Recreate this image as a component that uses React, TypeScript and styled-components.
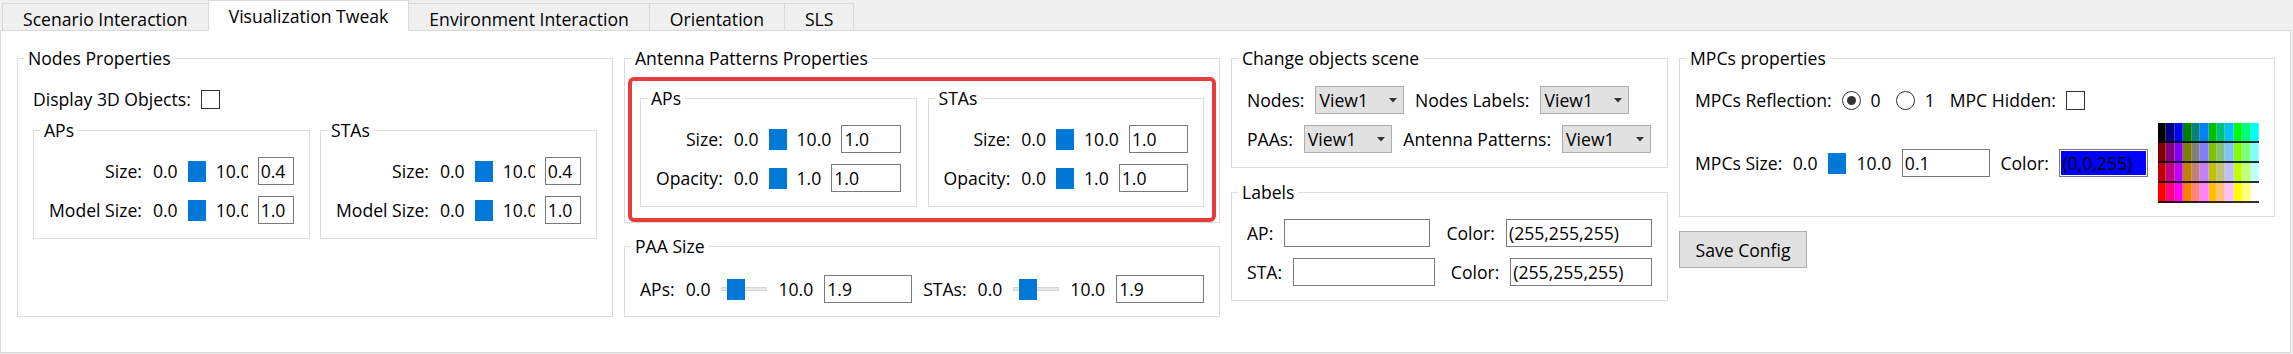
import React from "react";
import styled, { createGlobalStyle } from "styled-components";

const GlobalStyle = createGlobalStyle`
  html, body {
    margin: 0;
    padding: 0;
    background: #f0f0f0;
  }
  body {
    font-family: "Open Sans", "Noto Sans", "Liberation Sans", sans-serif;
    font-size: 17.6px;
    line-height: 20px;
    color: #000;
  }
  * {
    box-sizing: border-box;
  }
`;

const Window = styled.div`
  width: 2293px;
  height: 354px;
  overflow: hidden;
  background: #f0f0f0;
`;

const TabBar = styled.div`
  display: flex;
  align-items: flex-end;
  height: 30px;
  padding-left: 2px;
`;

const Tab = styled.div<{ $active?: boolean }>`
  position: relative;
  z-index: ${(p) => (p.$active ? 2 : 1)};
  height: ${(p) => (p.$active ? 31 : 27)}px;
  margin-bottom: ${(p) => (p.$active ? -1 : 0)}px;
  margin-left: -1px;
  padding: 4.5px 20px 0;
  border: 1px solid #d9d9d9;
  border-bottom: none;
  background: ${(p) => (p.$active ? "#fff" : "#f0f0f0")};
  white-space: nowrap;
  &:first-child {
    margin-left: 0;
  }
`;

const Pane = styled.div`
  display: flex;
  align-items: stretch;
  gap: 11px;
  height: 323px;
  margin-right: 2px;
  padding: 27px 15px 35px 16px;
  background: #fff;
  border: 1px solid #d9d9d9;
`;

const Column = styled.div<{ $w: number; $gap?: number; $top?: boolean }>`
  display: flex;
  flex-direction: column;
  flex: 0 0 ${(p) => p.$w}px;
  gap: ${(p) => p.$gap ?? 0}px;
  ${(p) => p.$top && "align-self: flex-start;"}
`;

const Group = styled.div<{ $pb?: number; $grow?: boolean }>`
  position: relative;
  min-width: 0;
  border: 1px solid #dcdcdc;
  padding: 0 15px ${(p) => p.$pb ?? 14}px;
  ${(p) => p.$grow && "flex: 1;"}
`;

const GroupTitle = styled.div`
  width: fit-content;
  margin: -11px 0 0 -9px;
  padding: 0 4px;
  background: #fff;
  line-height: 20px;
  white-space: nowrap;
`;

const GroupBody = styled.div<{ $pt: number; $gap?: number }>`
  display: flex;
  flex-direction: column;
  gap: ${(p) => p.$gap ?? 11}px;
  padding-top: ${(p) => p.$pt}px;
`;

const SubRow = styled.div<{ $gap: number }>`
  display: flex;
  gap: ${(p) => p.$gap}px;
  & > * {
    flex: 1 1 0;
  }
`;

const Highlight = styled.div`
  position: absolute;
  left: 3px;
  right: 3px;
  top: 18px;
  bottom: 0;
  border: 4px solid #e63c3c;
  border-radius: 6px;
  pointer-events: none;
`;

const Row = styled.div<{ $gap?: number }>`
  display: flex;
  align-items: center;
  gap: ${(p) => p.$gap ?? 11}px;
  min-height: 28px;
  white-space: nowrap;
`;

const Form = styled.div`
  display: grid;
  grid-template-columns: max-content minmax(0, 1fr);
  column-gap: 11px;
  row-gap: 11px;
  align-items: center;
`;

const FormLabel = styled.span`
  justify-self: end;
  white-space: nowrap;
`;

const Field = styled.div`
  display: flex;
  align-items: center;
  gap: 10px;
  min-width: 0;
  height: 28px;
`;

const Text = styled.span<{ $ml?: number }>`
  flex: none;
  white-space: nowrap;
  margin-left: ${(p) => p.$ml ?? 0}px;
`;

const MaxText = styled.span<{ $w?: number }>`
  flex: none;
  white-space: nowrap;
  overflow: hidden;
  ${(p) => p.$w && `width: ${p.$w}px;`}
`;

const SliderTrack = styled.div<{ $w: number }>`
  position: relative;
  flex: none;
  display: flex;
  align-items: center;
  width: ${(p) => p.$w}px;
  height: 21px;
`;

const Groove = styled.div`
  width: 100%;
  height: 4px;
  background: #e7e7e7;
  border: 1px solid #d6d6d6;
`;

const Handle = styled.div`
  position: absolute;
  top: 0;
  width: 18px;
  height: 21px;
  background: #0078d7;
`;

const LineEdit = styled.input<{ $w?: number }>`
  flex: ${(p) => (p.$w ? `0 0 ${p.$w}px` : "1 1 0")};
  width: 0;
  min-width: 0;
  height: 28px;
  padding: 0 2px;
  font: inherit;
  color: #000;
  background: #fff;
  border: 1px solid #7a7a7a;
  border-radius: 0;
  outline: none;
`;

const ColorBox = styled.div`
  flex: 1 1 0;
  min-width: 0;
  height: 28px;
  padding: 3px 2px 0;
  background: #0000ff;
  border: 1px solid #7a7a7a;
  box-shadow: inset 0 0 0 1px #fff;
  color: #000;
`;

const Combo = styled.div`
  display: flex;
  align-items: center;
  justify-content: space-between;
  flex: none;
  width: 88.5px;
  height: 28px;
  padding: 0 6px 0 3px;
  background: #e1e1e1;
  border: 1px solid #adadad;
`;

const CheckBox = styled.div`
  flex: none;
  width: 19px;
  height: 19px;
  background: #fff;
  border: 1px solid #333;
`;

const Radio = styled.div<{ $checked?: boolean }>`
  display: flex;
  align-items: center;
  justify-content: center;
  flex: none;
  width: 19px;
  height: 19px;
  border: 1px solid #333;
  border-radius: 50%;
  background: #fff;
  &::after {
    content: "";
    width: 9px;
    height: 9px;
    border-radius: 50%;
    background: ${(p) => (p.$checked ? "#333" : "transparent")};
  }
`;

const RadioOption = styled.label`
  display: flex;
  align-items: center;
  gap: 10px;
  margin-right: 5px;
`;

const Palette = styled.div`
  flex: none;
  display: grid;
  grid-template-columns: repeat(12, 1fr);
  grid-auto-rows: 20px;
  width: 101px;
`;

const Swatch = styled.div<{ $c: string }>`
  background: ${(p) => p.$c};
  box-shadow: inset 0 -2px 0 rgba(0, 0, 0, 0.8), inset -1px 0 0 rgba(255, 255, 255, 0.25);
`;

const Button = styled.button`
  width: 128px;
  height: 37px;
  padding: 0;
  font: inherit;
  color: #000;
  background: #e1e1e1;
  border: 1px solid #adadad;
  border-radius: 0;
`;

const tabs = [
  "Scenario Interaction",
  "Visualization Tweak",
  "Environment Interaction",
  "Orientation",
  "SLS",
];

const levels = [0, 128, 192, 255];
const blues = [0, 128, 255];
const paletteColors = levels.flatMap((r) =>
  levels.flatMap((g) => blues.map((b) => `rgb(${r},${g},${b})`))
);

function Slider({ width = 18, pct = 0 }: { width?: number; pct?: number }) {
  return (
    <SliderTrack $w={width}>
      {width > 18 && <Groove />}
      <Handle style={{ left: (width - 18) * pct }} />
    </SliderTrack>
  );
}

function Arrow() {
  return (
    <svg width="8" height="5" viewBox="0 0 8 5">
      <path d="M0 0h8L4 4.5z" fill="#333" />
    </svg>
  );
}

type SliderRow = { label: string; max: string; value: string };

function SliderGroup({
  title,
  rows,
  maxW,
  inputW,
}: {
  title: string;
  rows: SliderRow[];
  maxW?: number;
  inputW?: number;
}) {
  return (
    <Group>
      <GroupTitle>{title}</GroupTitle>
      <GroupBody $pt={17}>
        <Form>
          {rows.map((r) => (
            <React.Fragment key={r.label}>
              <FormLabel>{r.label}</FormLabel>
              <Field>
                <Text>0.0</Text>
                <Slider />
                <MaxText $w={maxW}>{r.max}</MaxText>
                <LineEdit $w={inputW} value={r.value} readOnly />
              </Field>
            </React.Fragment>
          ))}
        </Form>
      </GroupBody>
    </Group>
  );
}

const nodeRows = (v: string): SliderRow[] => [
  { label: "Size:", max: "10.0", value: v },
  { label: "Model Size:", max: "10.0", value: "1.0" },
];

const antennaRows: SliderRow[] = [
  { label: "Size:", max: "10.0", value: "1.0" },
  { label: "Opacity:", max: "1.0", value: "1.0" },
];

export default function App() {
  return (
    <Window>
      <GlobalStyle />
      <TabBar>
        {tabs.map((t) => (
          <Tab key={t} $active={t === "Visualization Tweak"}>
            {t}
          </Tab>
        ))}
      </TabBar>
      <Pane>
        <Column $w={596}>
          <Group $grow>
            <GroupTitle>Nodes Properties</GroupTitle>
            <GroupBody $pt={17} $gap={17}>
              <Row $gap={10}>
                <Text>Display 3D Objects:</Text>
                <CheckBox />
              </Row>
              <SubRow $gap={10}>
                <SliderGroup title="APs" rows={nodeRows("0.4")} maxW={32} />
                <SliderGroup title="STAs" rows={nodeRows("0.4")} maxW={32} />
              </SubRow>
            </GroupBody>
          </Group>
        </Column>

        <Column $w={596} $gap={23}>
          <Group $pb={15}>
            <GroupTitle>Antenna Patterns Properties</GroupTitle>
            <GroupBody $pt={30}>
              <SubRow $gap={11}>
                <SliderGroup title="APs" rows={antennaRows} />
                <SliderGroup title="STAs" rows={antennaRows} />
              </SubRow>
            </GroupBody>
            <Highlight />
          </Group>
          <Group $pb={13}>
            <GroupTitle>PAA Size</GroupTitle>
            <GroupBody $pt={19}>
              <Row>
                <Text>APs:</Text>
                <Text>0.0</Text>
                <Slider width={46} pct={0.19} />
                <Text>10.0</Text>
                <LineEdit value="1.9" readOnly />
                <Text>STAs:</Text>
                <Text>0.0</Text>
                <Slider width={46} pct={0.19} />
                <Text>10.0</Text>
                <LineEdit value="1.9" readOnly />
              </Row>
            </GroupBody>
          </Group>
        </Column>

        <Column $w={437} $gap={24} $top>
          <Group>
            <GroupTitle>Change objects scene</GroupTitle>
            <GroupBody $pt={18}>
              <Row>
                <Text>Nodes:</Text>
                <Combo>
                  View1
                  <Arrow />
                </Combo>
                <Text>Nodes Labels:</Text>
                <Combo>
                  View1
                  <Arrow />
                </Combo>
              </Row>
              <Row>
                <Text>PAAs:</Text>
                <Combo>
                  View1
                  <Arrow />
                </Combo>
                <Text>Antenna Patterns:</Text>
                <Combo>
                  View1
                  <Arrow />
                </Combo>
              </Row>
            </GroupBody>
          </Group>
          <Group>
            <GroupTitle>Labels</GroupTitle>
            <GroupBody $pt={17}>
              <Row>
                <Text>AP:</Text>
                <LineEdit value="" readOnly />
                <Text $ml={5}>Color:</Text>
                <LineEdit value="(255,255,255)" readOnly />
              </Row>
              <Row>
                <Text>STA:</Text>
                <LineEdit value="" readOnly />
                <Text $ml={5}>Color:</Text>
                <LineEdit value="(255,255,255)" readOnly />
              </Row>
            </GroupBody>
          </Group>
        </Column>

        <Column $w={596} $gap={14} $top>
          <Group $pb={13}>
            <GroupTitle>MPCs properties</GroupTitle>
            <GroupBody $pt={18} $gap={9}>
              <Row $gap={10}>
                <Text>MPCs Reflection:</Text>
                <RadioOption>
                  <Radio $checked />0
                </RadioOption>
                <RadioOption>
                  <Radio />1
                </RadioOption>
                <Text>MPC Hidden:</Text>
                <CheckBox />
              </Row>
              <Row $gap={10.5}>
                <Text>MPCs Size:</Text>
                <Text>0.0</Text>
                <Slider />
                <Text>10.0</Text>
                <LineEdit value="0.1" readOnly />
                <Text>Color:</Text>
                <ColorBox>(0,0,255)</ColorBox>
                <Palette>
                  {paletteColors.map((c, i) => (
                    <Swatch key={i} $c={c} />
                  ))}
                </Palette>
              </Row>
            </GroupBody>
          </Group>
          <div>
            <Button>Save Config</Button>
          </div>
        </Column>
      </Pane>
    </Window>
  );
}
